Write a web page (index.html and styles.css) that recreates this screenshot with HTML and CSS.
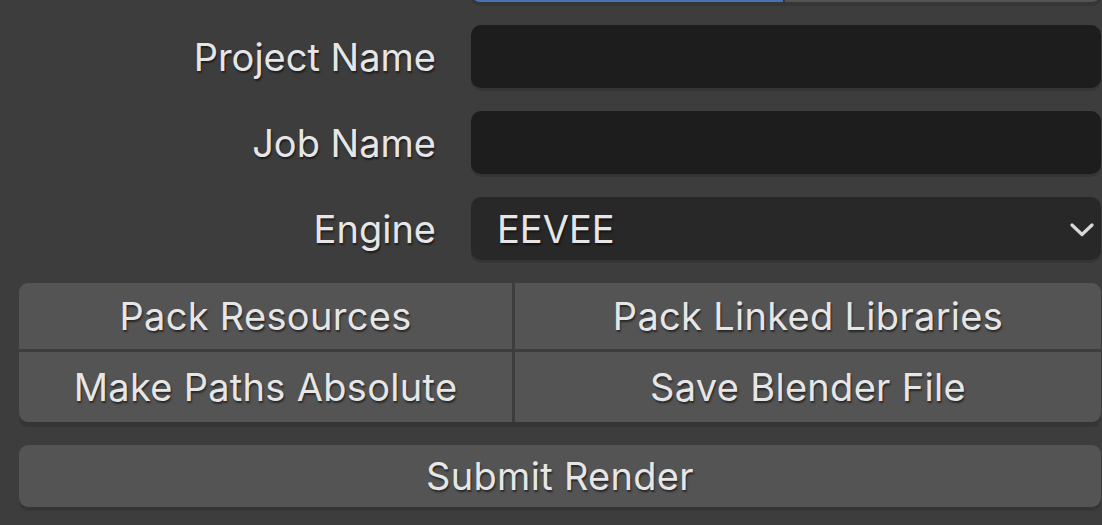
FILE: index.html
```html
<!DOCTYPE html>
<html>
<head>
<meta charset="utf-8">
<link rel="stylesheet" href="styles.css">
</head>
<body>
<div class="panel">
  <div class="row top-row">
    <div class="label"></div>
    <div class="segmented">
      <div class="seg active"></div>
      <div class="seg"></div>
    </div>
  </div>
  <div class="row">
    <div class="label">Project Name</div>
    <div class="field text-field"></div>
  </div>
  <div class="row">
    <div class="label">Job Name</div>
    <div class="field text-field"></div>
  </div>
  <div class="row">
    <div class="label">Engine</div>
    <div class="field dropdown">
      <span class="value">EEVEE</span>
      <svg class="chevron" width="26" height="16" viewBox="0 0 26 16">
        <polyline points="2,3 12,12.5 22,3" fill="none" stroke="#d9d9d9" stroke-width="3.2" stroke-linecap="round" stroke-linejoin="round"/>
      </svg>
    </div>
  </div>
  <div class="btn-grid">
    <div class="btn r1 c1">Pack Resources</div>
    <div class="btn r1 c2">Pack Linked Libraries</div>
    <div class="btn r2 c1">Make Paths Absolute</div>
    <div class="btn r2 c2">Save Blender File</div>
  </div>
  <div class="btn submit">Submit Render</div>
</div>
</body>
</html>
```

FILE: styles.css
```css
html, body {
  margin: 0;
  padding: 0;
  background: #3d3d3d;
  overflow: hidden;
}
body {
  width: 1102px;
  height: 525px;
  font-family: "Inter", "Noto Sans", sans-serif;
  color: #e6e6e6;
}
.panel {
  display: flex;
  flex-direction: column;
  gap: 23px;
  padding: 0 1px 0 19px;
}
.row {
  display: flex;
  align-items: center;
  gap: 35px;
  height: 63px;
}
.top-row {
  margin-top: -61px;
}
.label {
  width: 417px;
  flex: none;
  text-align: right;
  font-size: 38px;
  text-shadow: 1px 2px 2px rgba(0, 0, 0, 0.55);
}
.segmented {
  flex: 1;
  height: 63px;
  display: flex;
  gap: 2px;
  background: #333;
  border-radius: 9px;
  overflow: hidden;
  box-shadow: 0 4px 0 #363636;
}
.seg {
  flex: 1;
  background: #545454;
}
.seg.active {
  flex: 0 0 312px;
  background: #4772b3;
}
.field {
  flex: 1;
  height: 63px;
  border-radius: 10px;
  box-shadow: 0 3px 0 #353535;
  box-sizing: border-box;
}
.text-field {
  background: #1d1d1d;
}
.dropdown {
  background: #282828;
  display: flex;
  align-items: center;
  padding: 0 5px 0 26px;
  font-size: 38px;
  text-shadow: 1px 2px 2px rgba(0, 0, 0, 0.55);
}
.dropdown .value {
  flex: 1;
}
.chevron {
  display: block;
  margin-top: 2px;
}
.btn-grid {
  display: grid;
  grid-template-columns: 493px 1fr;
  grid-template-rows: 66px 70px;
  gap: 3px;
  background: #3d3d3d;
  border-radius: 9px;
  overflow: hidden;
  box-shadow: 0 5px 0 #353535;
}
.btn {
  background: #545454;
  display: flex;
  align-items: center;
  justify-content: center;
  font-size: 38px;
  letter-spacing: 0.3px;
  text-shadow: 1px 2px 2px rgba(0, 0, 0, 0.55);
}
.submit {
  height: 62px;
  border-radius: 9px;
  box-shadow: 0 4px 0 #353535;
}
```
